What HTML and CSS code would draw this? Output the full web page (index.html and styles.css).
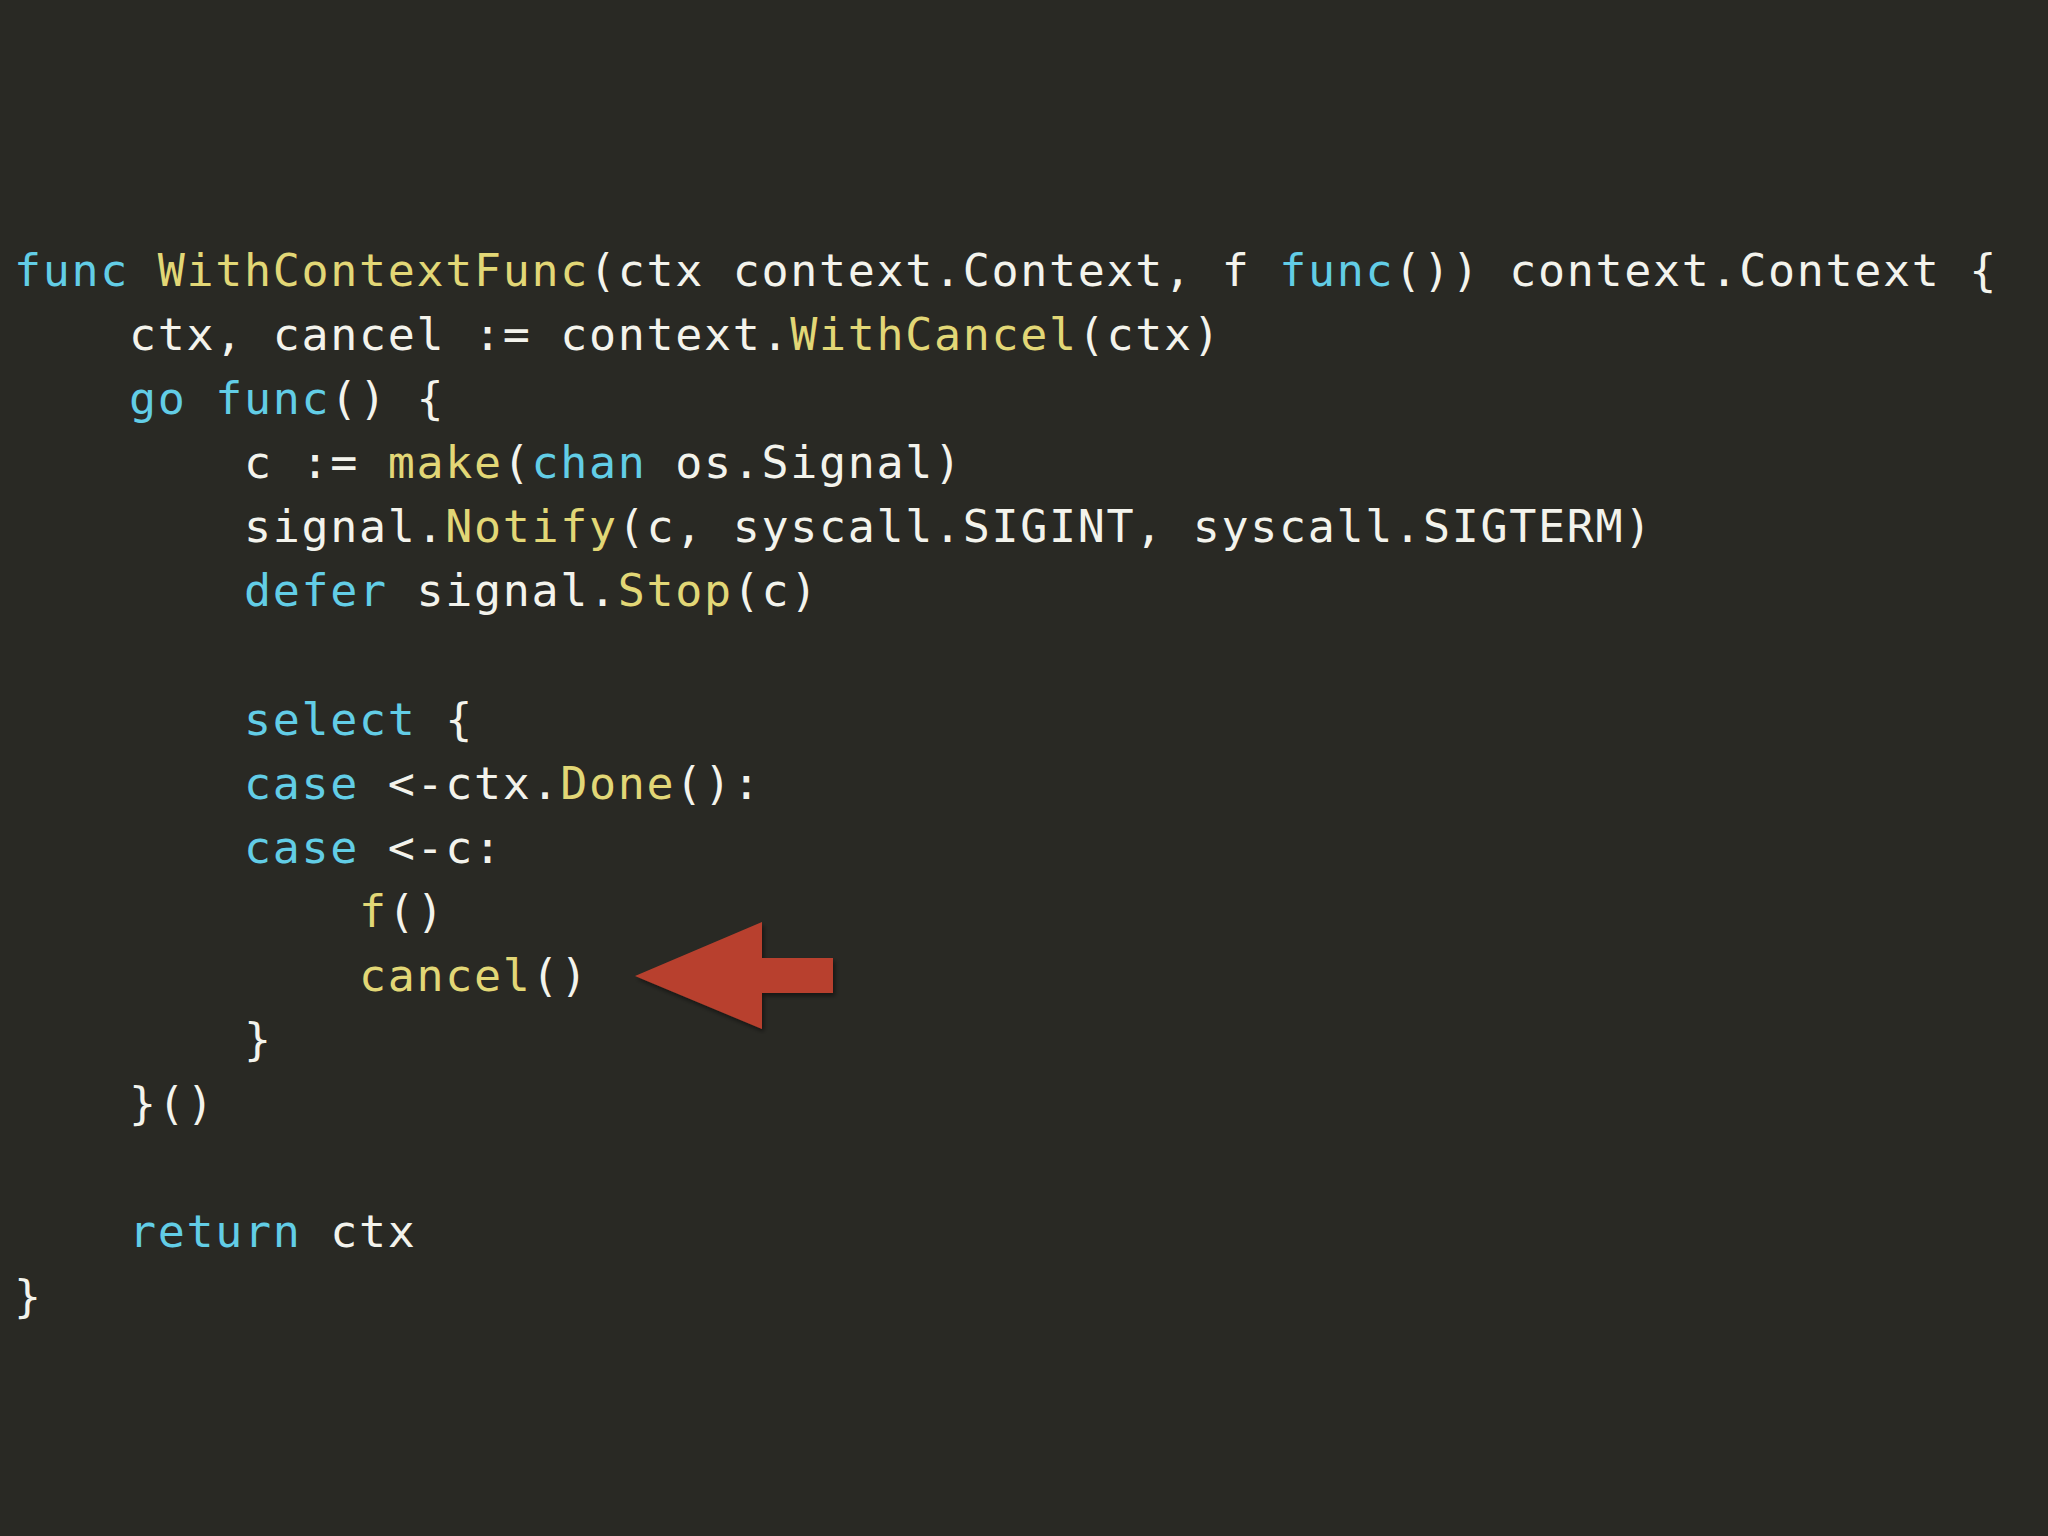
FILE: index.html
```html
<!DOCTYPE html>
<html>
<head>
<meta charset="utf-8">
<link rel="stylesheet" href="styles.css">
</head>
<body>
<main class="slide">
<pre class="code"><span class="kw">func</span> <span class="fn">WithContextFunc</span>(ctx context.Context, f <span class="kw">func</span>()) context.Context {
    ctx, cancel := context.<span class="fn">WithCancel</span>(ctx)
    <span class="kw">go</span> <span class="kw">func</span>() {
        c := <span class="fn">make</span>(<span class="kw">chan</span> os.Signal)
        signal.<span class="fn">Notify</span>(c, syscall.SIGINT, syscall.SIGTERM)
        <span class="kw">defer</span> signal.<span class="fn">Stop</span>(c)

        <span class="kw">select</span> {
        <span class="kw">case</span> &lt;-ctx.<span class="fn">Done</span>():
        <span class="kw">case</span> &lt;-c:
            <span class="fn">f</span>()
<span class="marked">            <span class="fn">cancel</span>()<svg class="arrow" width="204" height="112" viewBox="0 0 204 112"><defs><filter id="sh" x="-10%" y="-10%" width="130%" height="130%"><feDropShadow dx="2" dy="3" stdDeviation="2" flood-color="#000" flood-opacity="0.45"/></filter></defs><polygon filter="url(#sh)" fill="#b8412f" points="0,54 127,0 127,36 198,36 198,71 127,71 127,107"/></svg></span>
        }
    }()

    <span class="kw">return</span> ctx
}</pre>
</main>
</body>
</html>
```
FILE: styles.css
```css
html, body {
  margin: 0;
  padding: 0;
  background: #292924;
}
.slide {
  width: 2048px;
  height: 1536px;
  box-sizing: border-box;
  padding: 239px 0 0 14px;
  background: #292924;
}
.code {
  margin: 0;
  font-family: "DejaVu Sans Mono", "Liberation Mono", monospace;
  font-size: 45px;
  letter-spacing: 1.66px;
  line-height: 64.1px;
  color: #f3f3ec;
}
.kw {
  color: #62cde6;
}
.fn {
  color: #e2d776;
}
.marked {
  position: relative;
}
.arrow {
  position: absolute;
  left: calc(100% + 46px);
  top: -27px;
}
```
